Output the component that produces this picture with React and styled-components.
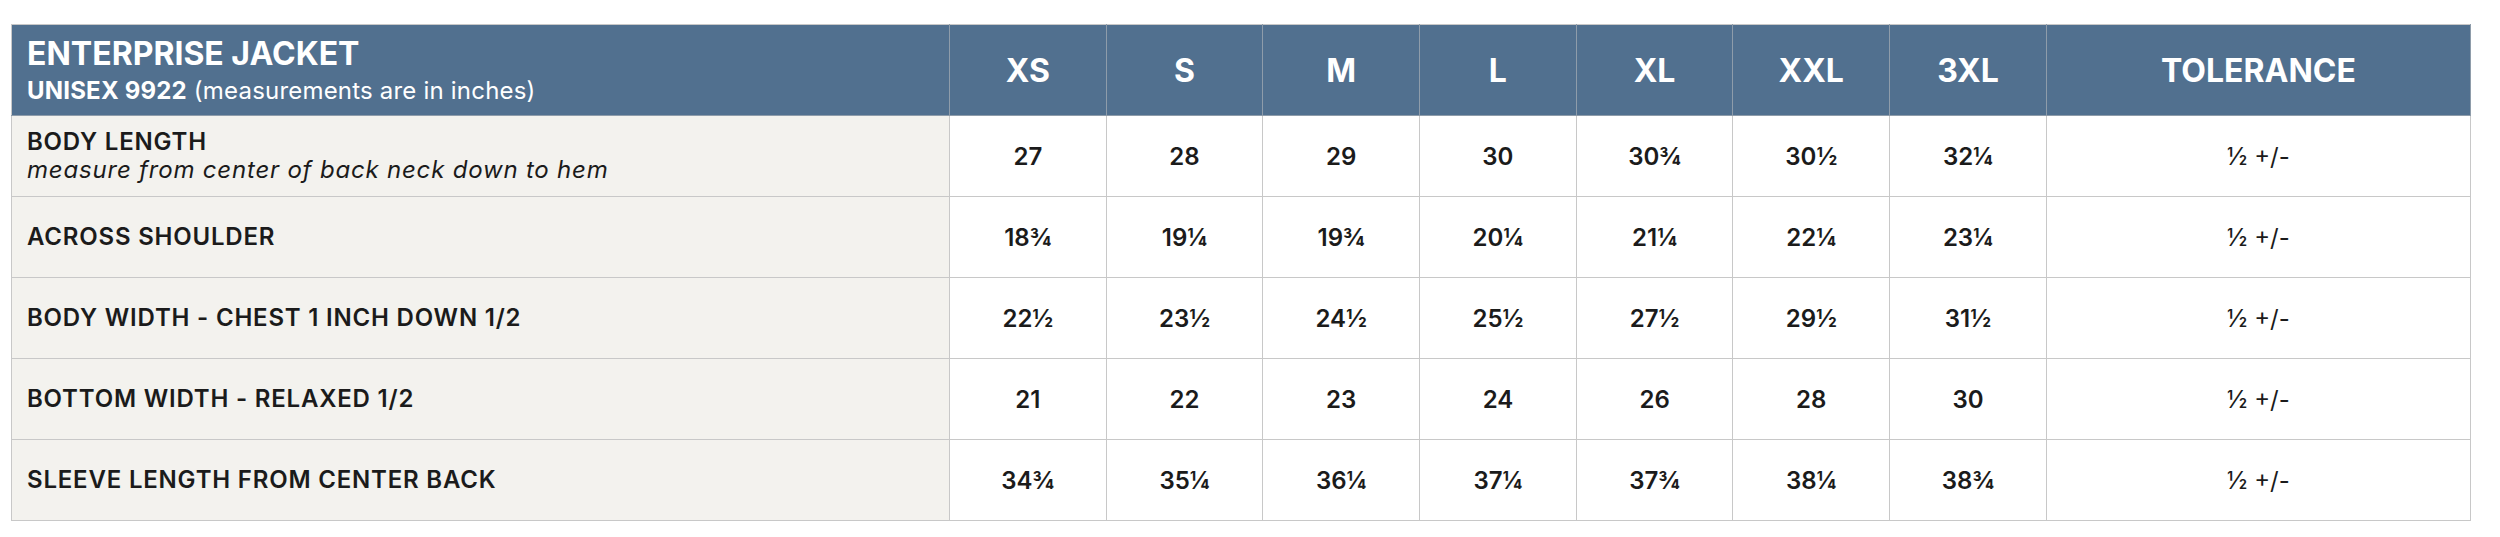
import React from "react";
import styled, { createGlobalStyle } from "styled-components";

const GlobalStyle = createGlobalStyle`
  body {
    margin: 0;
    background: #fff;
    font-family: Inter, "Noto Sans", sans-serif;
  }
`;

const sizes = ["XS", "S", "M", "L", "XL", "XXL", "3XL"];

const rows = [
  {
    label: "BODY LENGTH",
    note: "measure from center of back neck down to hem",
    values: ["27", "28", "29", "30", "30¾", "30½", "32¼"],
  },
  { label: "ACROSS SHOULDER", values: ["18¾", "19¼", "19¾", "20¼", "21¼", "22¼", "23¼"] },
  { label: "BODY WIDTH - CHEST 1 INCH DOWN 1/2", values: ["22½", "23½", "24½", "25½", "27½", "29½", "31½"] },
  { label: "BOTTOM WIDTH - RELAXED 1/2", values: ["21", "22", "23", "24", "26", "28", "30"] },
  { label: "SLEEVE LENGTH FROM CENTER BACK", values: ["34¾", "35¼", "36¼", "37¼", "37¾", "38¼", "38¾"] },
];

function App() {
  return (
    <Page>
      <GlobalStyle />
      <Table>
        <colgroup>
          <col style={{ width: 938 }} />
          {sizes.map((s) => (
            <col key={s} style={{ width: 156.7 }} />
          ))}
          <col />
        </colgroup>
        <thead>
          <tr>
            <TitleCell>
              <Title>ENTERPRISE JACKET</Title>
              <Sub>
                <b>UNISEX 9922</b> (measurements are in inches)
              </Sub>
            </TitleCell>
            {sizes.map((s) => (
              <HeadCell key={s}>{s}</HeadCell>
            ))}
            <HeadCell>TOLERANCE</HeadCell>
          </tr>
        </thead>
        <tbody>
          {rows.map((r) => (
            <tr key={r.label}>
              <LabelCell>
                {r.label}
                {r.note && <Note>{r.note}</Note>}
              </LabelCell>
              {r.values.map((v, i) => (
                <ValueCell key={i}>{v}</ValueCell>
              ))}
              <ValueCell $light>½ +/-</ValueCell>
            </tr>
          ))}
        </tbody>
      </Table>
    </Page>
  );
}

const Page = styled.div`
  padding: 24px 29px 20px 11px;
`;

const Table = styled.table`
  width: 2460px;
  border-collapse: collapse;
  table-layout: fixed;
  border: 1px solid #c8c8c8;
  color: #1b1b1b;
`;

const HeadCell = styled.th`
  height: 90px;
  padding: 0;
  background: #51708f;
  color: #fff;
  font-size: 32px;
  font-weight: 700;
  text-align: center;
  border: 1px solid #8e9caa;
  border-top-color: #c8c8c8;
`;

const TitleCell = styled(HeadCell)`
  text-align: left;
  padding: 0 15px;
  border-left-color: #c8c8c8;
`;

const Title = styled.div`
  font-size: 32px;
  font-weight: 700;
  line-height: 36px;
`;

const Sub = styled.div`
  font-size: 24px;
  font-weight: 400;
  letter-spacing: 0.2px;
  line-height: 28px;
  margin-top: 5px;

  & b {
    font-weight: 700;
  }
`;

const LabelCell = styled.td`
  height: 80px;
  padding: 0 15px;
  background: #f3f2ee;
  font-size: 24px;
  font-weight: 600;
  letter-spacing: 0.8px;
  line-height: 28px;
  border: 1px solid #c8c8c8;
`;

const Note = styled.div`
  font-style: italic;
  font-weight: 400;
  font-size: 24px;
  letter-spacing: 0.8px;
  line-height: 28px;
`;

const ValueCell = styled.td`
  padding: 0;
  text-align: center;
  font-size: 24px;
  font-weight: ${(p) => (p.$light ? 400 : 600)};
  border: 1px solid #c8c8c8;
`;

export default App;
